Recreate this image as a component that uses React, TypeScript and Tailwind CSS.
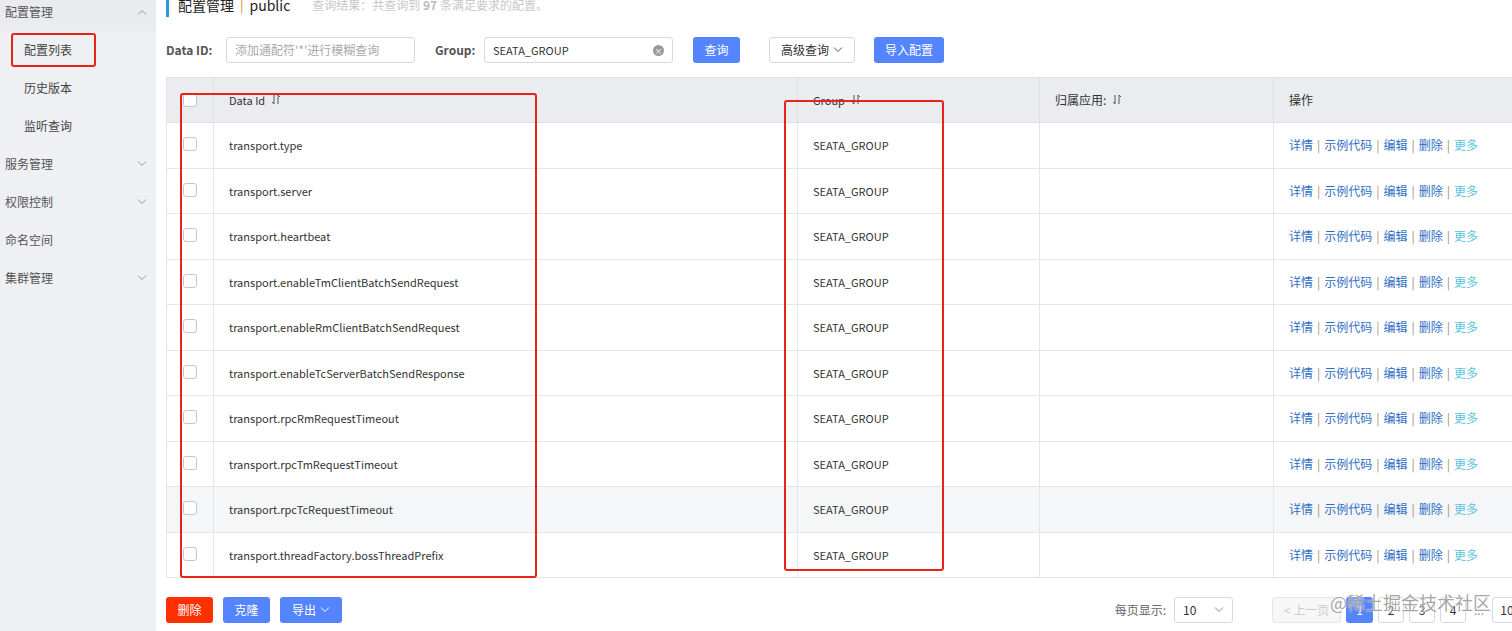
import React from "react";

const rows = [
  "transport.type",
  "transport.server",
  "transport.heartbeat",
  "transport.enableTmClientBatchSendRequest",
  "transport.enableRmClientBatchSendRequest",
  "transport.enableTcServerBatchSendResponse",
  "transport.rpcRmRequestTimeout",
  "transport.rpcTmRequestTimeout",
  "transport.rpcTcRequestTimeout",
  "transport.threadFactory.bossThreadPrefix",
];

const font = "font-['Noto_Sans_CJK_SC','Liberation_Sans',sans-serif]";

const Chevron = ({ up = false, className = "" }: { up?: boolean; className?: string }) => (
  <svg width="10" height="6" viewBox="0 0 10 6" className={className} fill="none" stroke="currentColor" strokeWidth="1">
    {up ? <path d="M1 5.5 5 1.5 9 5.5" /> : <path d="M1 0.5 5 4.5 9 0.5" />}
  </svg>
);

const SortIcon = () => (
  <svg width="10" height="11" viewBox="0 0 10 11" fill="none" stroke="#555" strokeWidth="1" className="inline-block ml-[6px] -mt-[2px]">
    <path d="M3 1v9M1 8l2 2" />
    <path d="M7 10V1M7 1l2 2" />
  </svg>
);

const Checkbox = () => <div className="w-[14px] h-[14px] border border-[#c4c6cf] rounded-[3px] bg-white" />;

const Sidebar = () => {
  const Top = ({ label, arrow, up }: { label: string; arrow?: boolean; up?: boolean }) => (
    <div className="h-[38px] flex items-center justify-between pl-[5px] pr-[9px] text-[12px] text-[#555]">
      <span>{label}</span>
      {arrow && <Chevron up={up} className="text-[#999]" />}
    </div>
  );
  const Sub = ({ label }: { label: string }) => (
    <div className="h-[38px] flex items-center pl-[24px] text-[12px] text-[#444]">{label}</div>
  );
  return (
    <div className="w-[156px] shrink-0 bg-[#eef0f3] -mt-[7px]">
      <div className="bg-[#e9ebee]">
        <Top label="配置管理" arrow up />
      </div>
      <div className="relative">
        <Sub label="配置列表" />
        <div className="absolute left-[11px] top-[2px] w-[85px] h-[34px] border-2 border-[#e8231a] rounded-[3px]" />
      </div>
      <Sub label="历史版本" />
      <Sub label="监听查询" />
      <Top label="服务管理" arrow />
      <Top label="权限控制" arrow />
      <Top label="命名空间" />
      <Top label="集群管理" arrow />
    </div>
  );
};

const Actions = () => (
  <div className="flex items-center text-[12px] gap-[4px]">
    <span className="text-[#2f6ec4]">详情</span>
    <span className="text-[#9a8f80]">|</span>
    <span className="text-[#2f6ec4]">示例代码</span>
    <span className="text-[#9a8f80]">|</span>
    <span className="text-[#2f6ec4]">编辑</span>
    <span className="text-[#9a8f80]">|</span>
    <span className="text-[#2f6ec4]">删除</span>
    <span className="text-[#9a8f80]">|</span>
    <span className="text-[#5ec3dc]">更多</span>
  </div>
);

const cols = "grid grid-cols-[47px_584px_242px_234px_300px]";

export default function App() {
  return (
    <div className={`w-[1512px] h-[631px] overflow-hidden flex bg-white text-[#333] ${font}`}>
      <Sidebar />
      <div className="flex-1 pl-[10px] relative">
        {/* title */}
        <div className="h-[24px] -mt-[7px] flex items-center border-l-[3px] border-[#2a9bd8] pl-[9px]">
          <span className="text-[14px] text-[#222]">配置管理</span>
          <span className="text-[13px] text-[#d08a2c] mx-[6px]">|</span>
          <span className="text-[14px] text-[#222]">public</span>
          <span className="ml-[22px] text-[12px] text-[#c8c8c8]">
            查询结果：共查询到 <b className="text-[#bbb]">97</b> 条满足要求的配置。
          </span>
        </div>

        {/* search */}
        <div className="flex items-center h-[26px] mt-[20px] text-[12px]">
          <span className="font-bold text-[#555] w-[60px]">Data ID:</span>
          <div className="w-[189px] h-[26px] border border-[#d9d9d9] rounded-[3px] flex items-center px-[8px] text-[#aaa]">
            添加通配符'*'进行模糊查询
          </div>
          <span className="font-bold text-[#555] ml-[20px] w-[49px]">Group:</span>
          <div className="w-[189px] h-[26px] border border-[#d9d9d9] rounded-[3px] flex items-center justify-between px-[8px] text-[#333]">
            <span className="text-[11px]">SEATA_GROUP</span>
            <span className="w-[11px] h-[11px] rounded-full bg-[#999] text-white text-[8px] leading-[11px] text-center">×</span>
          </div>
          <button className="ml-[20px] w-[47px] h-[26px] rounded-[3px] bg-[#5584ff] text-white">查询</button>
          <button className="ml-[29px] w-[86px] h-[26px] rounded-[3px] border border-[#d9d9d9] text-[#333] flex items-center justify-center gap-[4px]">
            高级查询 <Chevron className="text-[#555]" />
          </button>
          <button className="ml-[19px] w-[70px] h-[26px] rounded-[3px] bg-[#5584ff] text-white">导入配置</button>
        </div>

        {/* table */}
        <div className="mt-[14px] w-[1407px] border-l border-[#e6e6e6] text-[12px] relative">
          <div className={`${cols} h-[46px] bg-[#ebecf0] border-y border-[#e0e0e0]`}>
            <div className="flex items-center justify-center border-r border-[#e0e0e0]"><Checkbox /></div>
            <div className="flex items-center pl-[15px] border-r border-[#e0e0e0] text-[11px]">Data Id<SortIcon /></div>
            <div className="flex items-center pl-[15px] border-r border-[#e0e0e0] text-[11px]">Group<SortIcon /></div>
            <div className="flex items-center pl-[15px] border-r border-[#e0e0e0]">归属应用:<SortIcon /></div>
            <div className="flex items-center pl-[15px]">操作</div>
          </div>
          {rows.map((r, i) => (
            <div key={r} className={`${cols} h-[45.5px] border-b border-[#e6e6e6] ${i === 8 ? "bg-[#f5f6f8]" : "bg-white"}`}>
              <div className="flex items-center justify-center border-r border-[#e6e6e6] -mt-[2px]"><Checkbox /></div>
              <div className="flex items-center pl-[15px] border-r border-[#e6e6e6] text-[11px]">{r}</div>
              <div className="flex items-center pl-[15px] border-r border-[#e6e6e6] text-[11px]">SEATA_GROUP</div>
              <div className="border-r border-[#e6e6e6]" />
              <div className="flex items-center pl-[15px]"><Actions /></div>
            </div>
          ))}
          {/* annotation boxes */}
          <div className="absolute left-[13px] top-[16px] w-[357px] h-[485px] border-2 border-[#e8231a] rounded-[3px]" />
          <div className="absolute left-[617px] top-[23px] w-[160px] h-[471px] border-2 border-[#e8231a] rounded-[3px]" />
        </div>

        {/* footer */}
        <div className="flex items-center justify-between mt-[19px] text-[12px] w-[1356px]">
          <div className="flex items-center gap-[10px]">
            <button className="w-[47px] h-[26px] rounded-[3px] bg-[#ff3000] text-white">删除</button>
            <button className="w-[47px] h-[26px] rounded-[3px] bg-[#5584ff] text-white">克隆</button>
            <button className="w-[62px] h-[26px] rounded-[3px] bg-[#5584ff] text-white flex items-center justify-center gap-[4px]">
              导出 <Chevron className="text-white" />
            </button>
          </div>
          <div className="flex items-center">
            <span className="text-[#666] mr-[8px]">每页显示:</span>
            <div className="w-[59px] h-[26px] border border-[#d9d9d9] rounded-[3px] flex items-center justify-between px-[8px] text-[#333]">
              <span>10</span>
              <Chevron className="text-[#888]" />
            </div>
            <div className="ml-[39px] w-[69px] h-[26px] border border-[#e6e6e6] bg-[#f7f7f7] rounded-[3px] flex items-center justify-center text-[#ccc]">
              &lt; 上一页
            </div>
            <div className="ml-[5px] w-[27px] h-[26px] rounded-[3px] bg-[#5584ff] text-white flex items-center justify-center">1</div>
            {["2", "3", "4"].map((p) => (
              <div key={p} className="ml-[5px] w-[26px] h-[26px] rounded-[3px] border border-[#d9d9d9] flex items-center justify-center">{p}</div>
            ))}
            <span className="ml-[8px] text-[#999]">...</span>
            <div className="ml-[8px] w-[30px] h-[26px] rounded-[3px] border border-[#d9d9d9] flex items-center justify-center">10</div>
          </div>
        </div>

        {/* watermark */}
        <div className="absolute z-10 left-[1174px] top-[589px] text-[18px] text-[#8f8f8f]/80 [text-shadow:0_0_2px_#fff]">
          @稀土掘金技术社区
        </div>
      </div>
    </div>
  );
}
